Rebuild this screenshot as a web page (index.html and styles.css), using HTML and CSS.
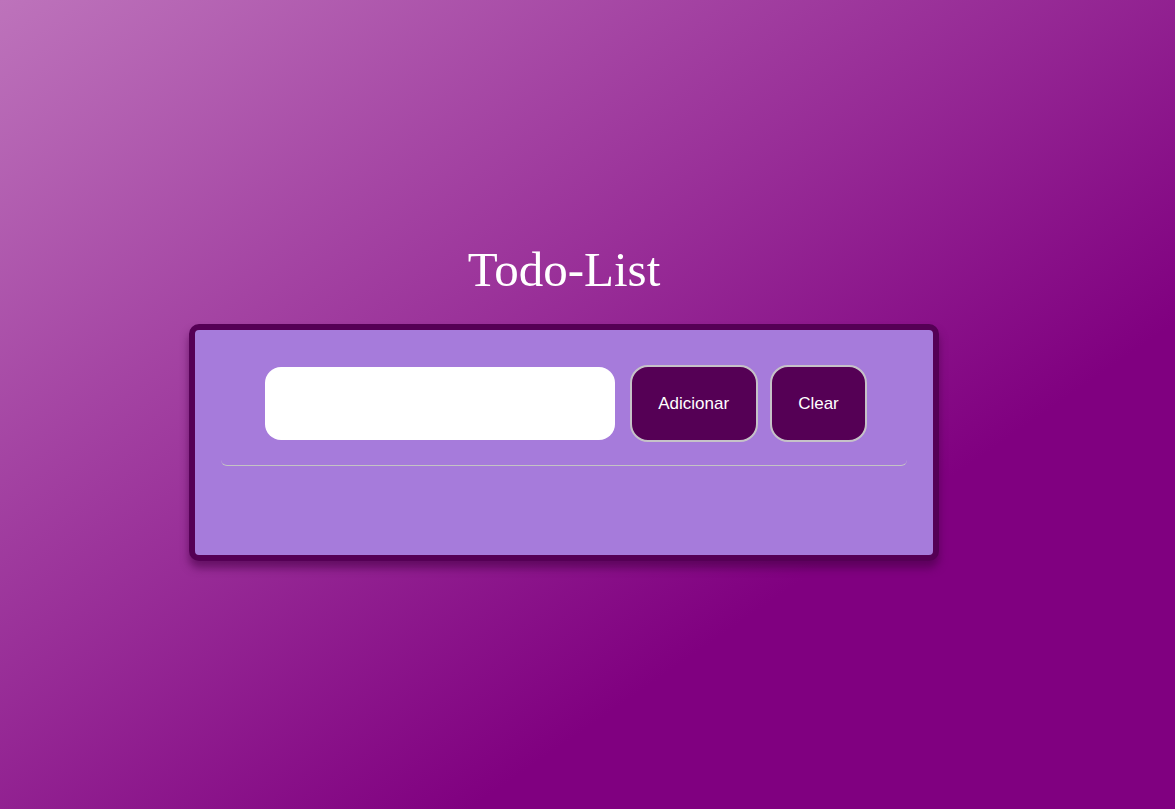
FILE: index.html
```html
<!DOCTYPE html>
<html lang="pt">
<head>
<meta charset="utf-8">
<title>Todo-List</title>
<link rel="stylesheet" href="styles.css">
</head>
<body>
<main class="page">
  <h1 class="title">Todo-List</h1>
  <section class="card">
    <form class="form-row">
      <input class="task-input" type="text">
      <button class="btn" type="button">Adicionar</button>
      <button class="btn" type="button">Clear</button>
    </form>
    <ul class="task-list"></ul>
  </section>
</main>
</body>
</html>
```
FILE: styles.css
```css
html, body {
  margin: 0;
  padding: 0;
}
body {
  min-height: 100vh;
  background: linear-gradient(to bottom right, #bd73bb 0%, #800080 70%, #800080 100%);
  font-family: "Liberation Sans", Arial, sans-serif;
}
.page {
  display: flex;
  flex-direction: column;
  align-items: center;
  padding: 242px 47px 0 0;
}
.title {
  margin: 0 0 26px 0;
  font-family: "Liberation Serif", "Times New Roman", serif;
  font-weight: normal;
  font-size: 49px;
  line-height: 56px;
  color: #ffffff;
}
.card {
  box-sizing: border-box;
  width: 750px;
  height: 237px;
  border: 6px solid #550055;
  border-radius: 10px;
  background: #a67bdb;
  padding: 0 26px;
  box-shadow: 0 7px 9px rgba(70, 0, 70, 0.6);
}
.form-row {
  display: flex;
  align-items: center;
  justify-content: center;
  padding: 35px 0 23px 4px;
  border-bottom: 1px solid #c4c4c4;
  border-radius: 0 0 6px 6px;
  margin: 0;
}
.task-input {
  box-sizing: border-box;
  width: 350px;
  height: 73px;
  border: none;
  border-radius: 16px;
  background: #ffffff;
  outline: none;
  margin-right: 15px;
}
.btn {
  box-sizing: border-box;
  height: 77px;
  padding: 0 26.5px;
  border: 2px solid #c6c2c8;
  border-radius: 18px;
  background: #550055;
  color: #ffffff;
  font-family: "Liberation Sans", Arial, sans-serif;
  font-size: 17px;
}
.btn + .btn {
  margin-left: 12px;
}
.task-list {
  margin: 0;
  padding: 0;
  list-style: none;
}
```
